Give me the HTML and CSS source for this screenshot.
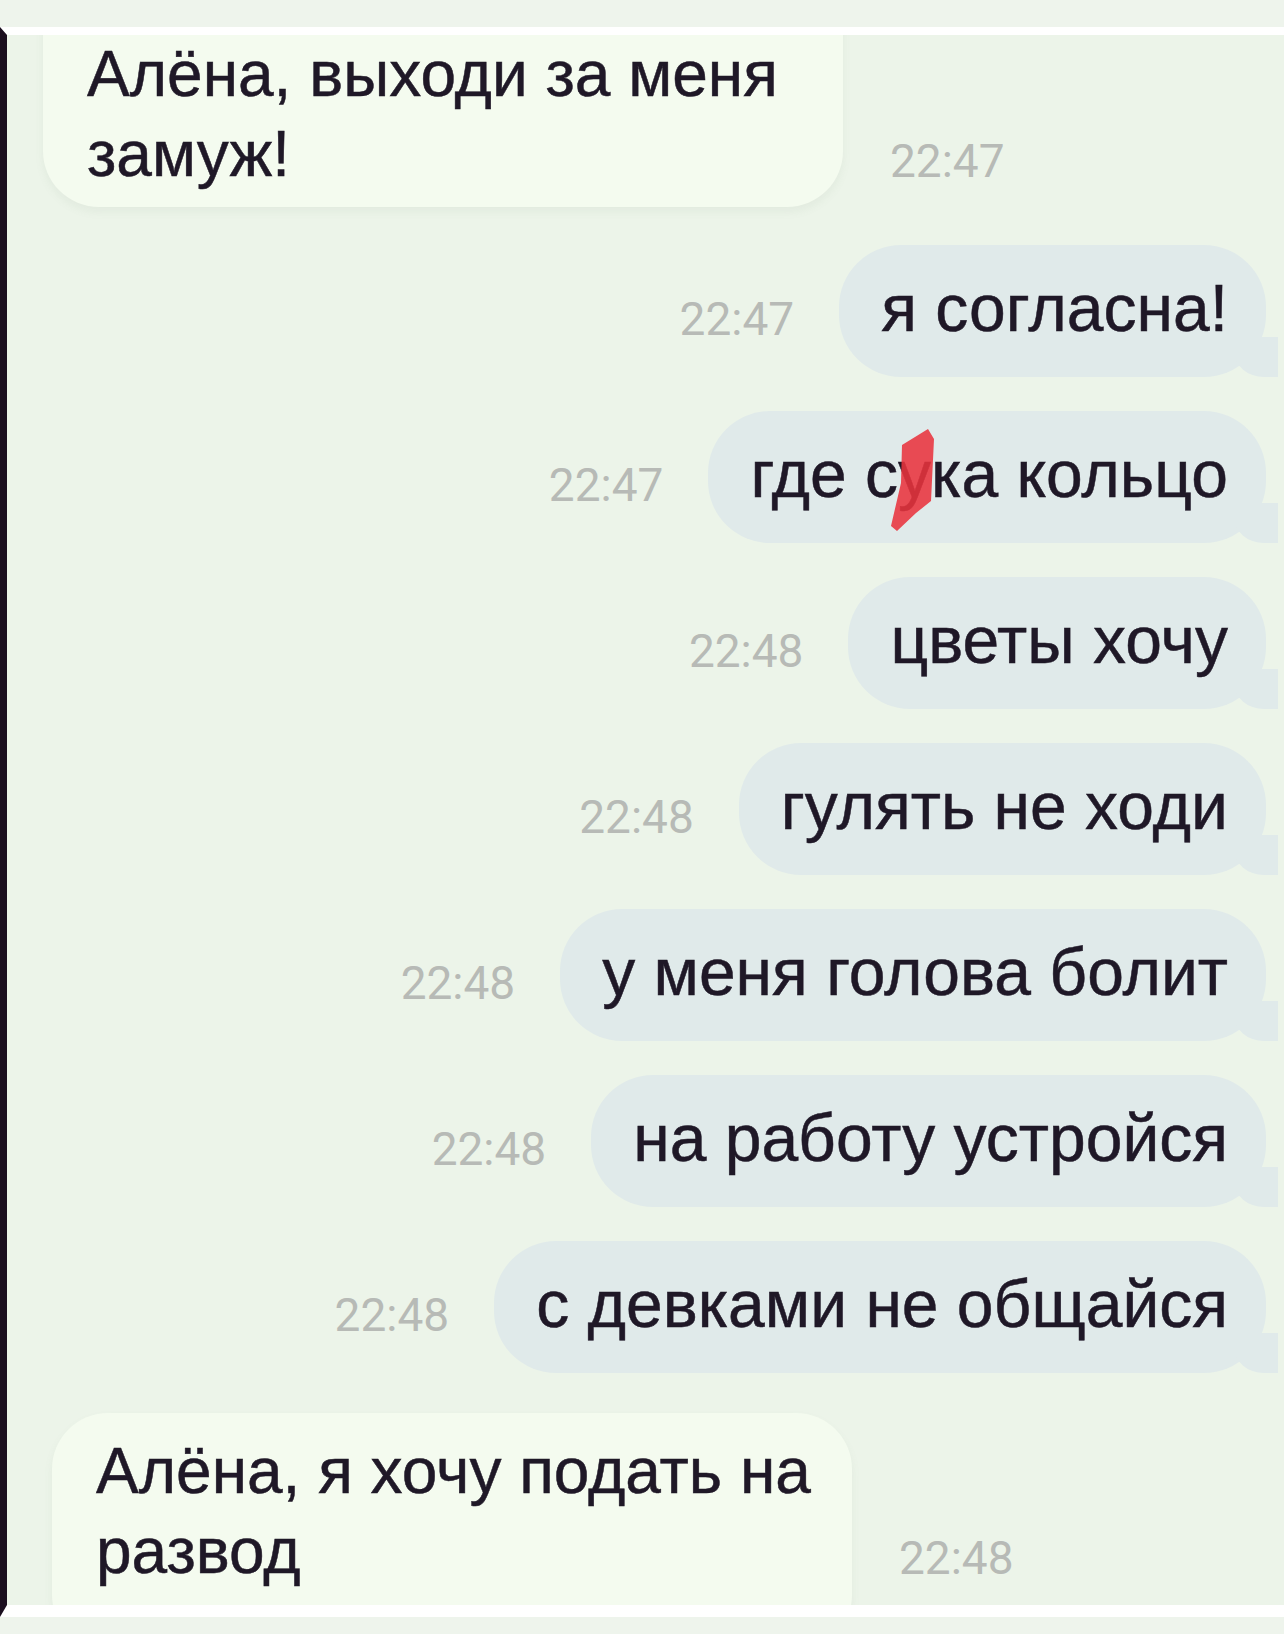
FILE: index.html
```html
<!DOCTYPE html>
<html lang="ru">
<head>
    <meta charset="UTF-8">
    <meta name="viewport" content="width=device-width, initial-scale=1.0">
    <title>Переписка</title>
    <link rel="stylesheet" href="styles.css">
</head>
<body>
    <div class="top-band"></div>

    <main class="screen">
        <div class="chat">
            <div class="row in first">
                <div class="bubble">Алёна, выходи за меня<br>замуж!</div>
                <span class="time">22:47</span>
            </div>

            <div class="row out">
                <span class="time">22:47</span>
                <div class="bubble">я согласна!</div>
            </div>

            <div class="row out">
                <span class="time">22:47</span>
                <div class="bubble">где с<span class="censored">у<svg class="scribble" viewBox="0 0 54 110" width="54" height="110"><polygon points="14,20 40,4 46,14 43,76 28,88 9,106 3,101 13,58"/></svg></span>ка кольцо</div>
            </div>

            <div class="row out">
                <span class="time">22:48</span>
                <div class="bubble">цветы хочу</div>
            </div>

            <div class="row out">
                <span class="time">22:48</span>
                <div class="bubble">гулять не ходи</div>
            </div>

            <div class="row out">
                <span class="time">22:48</span>
                <div class="bubble">у меня голова болит</div>
            </div>

            <div class="row out">
                <span class="time">22:48</span>
                <div class="bubble">на работу устройся</div>
            </div>

            <div class="row out">
                <span class="time">22:48</span>
                <div class="bubble">с девками не общайся</div>
            </div>

            <div class="row in last">
                <div class="bubble">Алёна, я хочу подать на<br>развод</div>
                <span class="time">22:48</span>
            </div>
        </div>
    </main>

    <div class="bottom-band"></div>
</body>
</html>
```

FILE: styles.css
```css
body {
    margin: 0;
    padding: 0;
    background-color: #eef4ec;
    font-family: 'Liberation Sans', Arial, sans-serif;
    color: #1f1827;
}
.top-band {
    height: 27px;
}
.bottom-band {
    height: 17px;
}
.screen {
    height: 1570px;
    overflow: hidden;
    background-color: #ecf4e9;
    border-top: 8px solid #ffffff;
    border-bottom: 12px solid #ffffff;
    border-left: 7px solid #1b0f1f;
}
.chat {
    display: flex;
    flex-direction: column;
    gap: 34px;
}
.row {
    display: flex;
}
.row.out {
    justify-content: flex-end;
    align-items: center;
    gap: 45px;
    padding-right: 18px;
}
.row.in {
    align-items: flex-end;
    gap: 47px;
    padding-left: 36px;
}
.bubble {
    position: relative;
    white-space: nowrap;
    -webkit-text-stroke: 0.5px #1f1827;
}
.row.in .bubble {
    box-sizing: border-box;
    width: 800px;
    padding: 18px 30px 18px 44px;
    font-size: 64px;
    line-height: 80px;
    background-color: #f4fbef;
    border-radius: 56px;
    box-shadow: 0 5px 8px rgba(120, 140, 120, 0.08);
}
.row.out .bubble {
    padding: 0 38px 6px 42px;
    font-size: 66px;
    line-height: 126px;
    background-color: #e0eaea;
    border-radius: 62px;
}
/* хвостик у исходящих */
.row.out .bubble::before {
    content: "";
    position: absolute;
    right: -12px;
    bottom: 0;
    width: 44px;
    height: 40px;
    background-color: #e0eaea;
    border-bottom-left-radius: 30px 26px;
}
.row.out .bubble::after {
    content: "";
    position: absolute;
    right: -40px;
    bottom: 0;
    width: 28px;
    height: 40px;
    background-color: #ecf4e9;
    border-bottom-left-radius: 18px 20px;
}
.time {
    font-family: Roboto, 'Liberation Sans', sans-serif;
    font-size: 46px;
    line-height: 46px;
    color: #b7bab6;
}
.row.out .time {
    margin-top: 16px;
}
.row.in .time {
    margin-bottom: 28px;
}

/* первое и последнее сообщение обрезаны краем экрана */
.row.first {
    margin-top: -65px;
    margin-bottom: 4px;
}
.row.in.first .bubble {
    padding-top: 64px;
    padding-bottom: 13px;
}
.row.in.first .time {
    margin-bottom: 23px;
}
.row.last {
    margin-top: 6px;
    padding-left: 45px;
}
.row.in.last .bubble {
    padding-bottom: 60px;
}
.row.in.last .time {
    margin-bottom: 70px;
}

.censored {
    position: relative;
}
.scribble {
    position: absolute;
    left: -10px;
    top: -12px;
}
.scribble polygon {
    fill: #e8333d;
    fill-opacity: 0.88;
}
```
